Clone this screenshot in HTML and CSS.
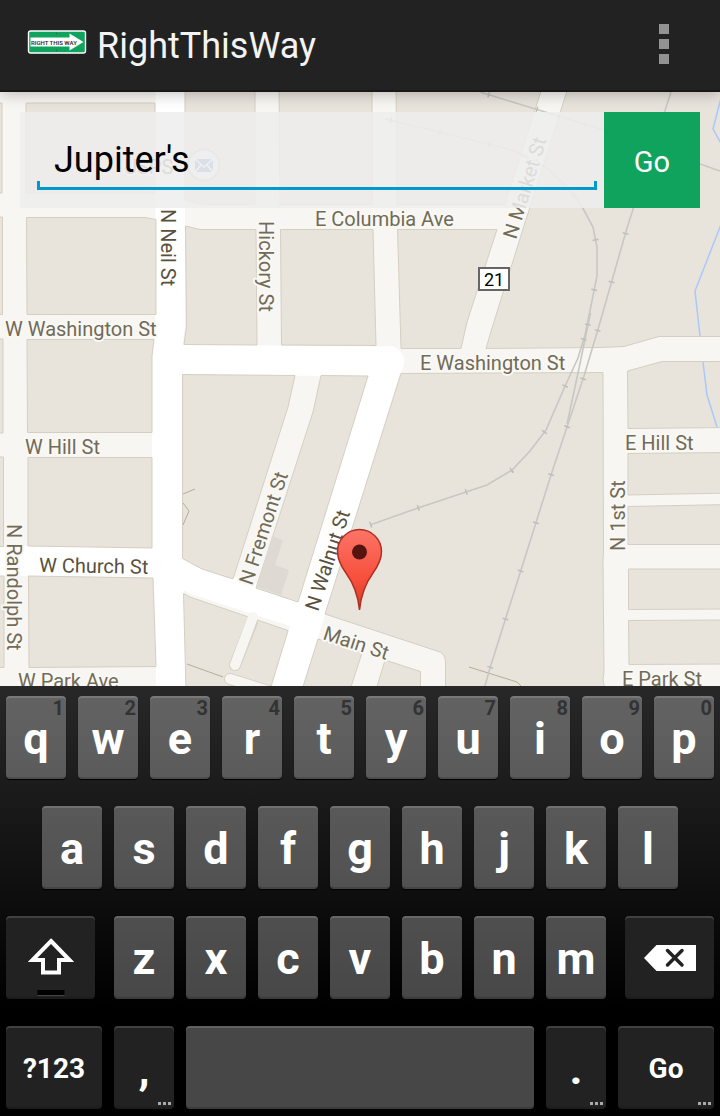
FILE: index.html
```html
<!DOCTYPE html>
<html lang="en">
<head>
<meta charset="utf-8">
<meta name="viewport" content="width=device-width, initial-scale=1">
<title>RightThisWay</title>
<link rel="stylesheet" href="styles.css">
</head>
<body>
<header class="bar">
  <svg class="logo" viewBox="0 0 60 24" aria-hidden="true">
    <rect x="1.500" y="1" width="57" height="22" rx="2" fill="#10a35e" stroke="#fff" stroke-width="1.4"/>
    <path d="M3.500 7.500H42.500V3.500L56.500 12L42.500 20.500V16.500H3.500Z" fill="#fff"/>
    <text x="4" y="14.500" class="logo-text">RIGHT THIS WAY</text>
    <circle cx="29.500" cy="3.500" r=".8" fill="#35604a"/>
    <circle cx="29.500" cy="20.500" r=".8" fill="#35604a"/>
  </svg>
  <h1 class="title">RightThisWay</h1>
  <button class="more" type="button" aria-label="More options"><span class="dot"></span><span class="dot"></span><span class="dot"></span></button>
</header>

<main class="stage">
  <svg class="map" viewBox="0 92 720 594" preserveAspectRatio="xMidYMin slice" role="img" aria-label="Street map">
    <defs>
      <linearGradient id="pin" x1="0" y1="0" x2="0" y2="1">
        <stop offset="0" stop-color="#fb7468"/><stop offset=".6" stop-color="#f8503d"/><stop offset="1" stop-color="#d93a26"/>
      </linearGradient>
    </defs>
    <rect x="0" y="92" width="720" height="594" fill="#f7f6f2"/>
    <g class="major">
      <path d="M155.500 80H185V326L182 350V558L184 594L186 690H156V667L153 578L152 548V355L155.500 335Z" fill="#fff" stroke="none"/>
      <path d="M169 359.500L388 361.500L286 690"/>
      <path d="M-5 561H28L152 563L172 564L196 580L308 616"/>
    </g>
    <g class="blocks">
      <path d="M-5 103H2V193H-5ZM-5 217H2.500V314.500H-5ZM-5 339H3V433H-5ZM-5 457H3.500V546.500H-5ZM-5 576H4V667.500H-5Z"/>
      <path d="M26 103H155V194L145 193H26Z"/>
      <path d="M26.500 217.500H145L156 219.500V314.500H27Z"/>
      <path d="M27 339.500H154L152 356V432.500H27.500Z"/>
      <path d="M28 457.500H152V548L28 546Z"/>
      <path d="M28.500 576L153 578L156 666.500L29 667.500Z"/>
      <path d="M185 80H255V204.500H205L185 200Z"/>
      <path d="M185.500 226L200 229.500H256L257 345L184 344.500L186.500 326Z"/>
      <path d="M279 80H372V204.500H280Z"/>
      <path d="M280.500 229.500H373L376 345.500L281.500 345Z"/>
      <path d="M396 80H544.500L505 204.500H397Z"/>
      <path d="M397.500 229.500H497L467 322L461 348.500H401Z"/>
      <path d="M570.500 80H730V336.500H659L624 346.500L600 347.500L486 348.500L492 328L523 229Z"/>
      <path d="M182.500 374.500L295 375.500L288 407L233 579L202 569L182.500 558.500Z"/>
      <path d="M321 375.500L368 376L298 602L256 588L313 412Z"/>
      <path d="M183.500 593.500L190 597L288 630.500L270 690H186Z"/>
      <path d="M401 373.500L603 372.500L603.500 553L603 561L604 672L603 680L605 690H445.500V662Q445.500 653 437 651L325 614Z"/>
      <path d="M318 639L362 653L350 690H302Z"/>
      <path d="M385 660L420.500 671.500V690H376Z"/>
      <path d="M627.500 371L662 361.500H730V427.500L628 428.500Z"/>
      <path d="M628 453.500L730 452.500V493L628 495Z"/>
      <path d="M628 506.500L730 504.500V544.500H628Z"/>
      <path d="M628.500 569H730V609L628.500 609.500Z"/>
      <path d="M628.500 620.500L730 620V664L629 664.500Z"/>
    </g>
    <path d="M272 536L283 540L275 565L289 570L281 595L257 587Z" fill="#dedad3"/>
    <path d="M388 346A15.500 15.500 0 0 1 404 362Q404 368 400 374L382 362Z" fill="#fff"/>
    <g fill="none" stroke-linecap="round">
      <path d="M252 622L235 665M230 679L285 696" stroke="#d8d2c5" stroke-width="12"/>
      <path d="M253 617L235 665M230 679L285 696" stroke="#f7f6f2" stroke-width="10"/>
    </g>
    <g fill="none" stroke="#b5ae95" stroke-width="1">
      <path d="M183 494L195 489M183 503L189 511L183 525M187 664L223 677M469 667L517 682L521 686"/>
    </g>
    <g class="water"><path d="M721 98L713 129L722 145M722 222L695 291L700 336M703 362L707 395L717 427"/></g>
    <g class="rail">
      <path d="M370 525L418 508L466 492L487 485L512 470L530 451L546 430L566 384L578 358L585 335L593 296L597 276V247L593 227L580 203L565 185L545 167L515 151L443 133L385 119"/>
      <path d="M488 94.500L537 109.500L604 130L720 171"/>
      <path d="M490 668L521 570L552 472L568 424L584 376L599 326L627 228L671 92"/>
      <path d="M480 92L488 94.500M485 686L490 668M590.500 313L588 325L578 373L567 424"/>
    </g>
    <g class="ties">
      <path d="M370 525L418 508L466 492L487 485L512 470L530 451L546 430L566 384L578 358L585 335L593 296L597 276V247L593 227L580 203L565 185L545 167L515 151L443 133L385 119"/>
      <path d="M488 94.500L537 109.500L604 130"/>
      <path d="M490 668L521 570L552 472L568 424L584 376L599 326L627 228"/>
      <path d="M588 324L578 373"/>
    </g>
    <g class="labels">
      <text x="124" y="174">USPS</text>
      <text x="315" y="226">E Columbia Ave</text>
      <text x="5" y="336">W Washington St</text>
      <text x="420" y="370">E Washington St</text>
      <text x="25" y="454">W Hill St</text>
      <text x="625" y="450">E Hill St</text>
      <text x="18" y="688">W Park Ave</text>
      <text x="622" y="686">E Park St</text>
      <text transform="translate(259 221) rotate(90)">Hickory St</text>
      <text transform="translate(7 524) rotate(90)">N Randolph St</text>
      <text transform="translate(625 551) rotate(-90)">N 1st St</text>
      <text transform="translate(516 240) rotate(-73)">N Market St</text>
      <text transform="translate(252 586) rotate(-72)">N Fremont St</text>
      <text transform="translate(322 639) rotate(18)">Main St</text>
      <g class="strong">
        <text transform="translate(161 209) rotate(90)">N Neil St</text>
        <text transform="translate(39 572) rotate(1)">W Church St</text>
        <text transform="translate(318 612) rotate(-72)">N Walnut St</text>
      </g>
    </g>
    <circle cx="204" cy="165" r="15.500" fill="#f8f8f8" stroke="#c8c4bc" stroke-width="2"/>
    <rect x="195" y="159" width="18" height="13" fill="#6488d0"/>
    <path d="M195 159L204 167L213 159M195 172L201 165M213 172L207 165" fill="none" stroke="#fff" stroke-width="1.500"/>
    <rect x="479" y="268" width="30" height="22" fill="#fff" stroke="#666" stroke-width="2"/>
    <text x="494" y="285.500" class="route">21</text>
    <path d="M359.500 610C358 594 354 584 346 573C341 566 337.500 560 337.500 551.500A22 22 0 0 1 381.500 551.500C381.500 560 378 566 373 573C365 584 361 594 359.500 610Z" fill="url(#pin)" stroke="#b02f23" stroke-width="1.500"/>
    <circle cx="359.500" cy="552" r="7.500" fill="#561410"/>
  </svg>
  <form class="search" onsubmit="return false">
    <div class="field"><input class="query" type="text" value="Jupiter's" aria-label="Destination"></div>
    <button class="go" type="submit">Go</button>
  </form>
</main>

<section class="keyboard" aria-label="Keyboard">
  <div class="row">
    <button class="key" type="button">q<span class="alt">1</span></button>
    <button class="key" type="button">w<span class="alt">2</span></button>
    <button class="key" type="button">e<span class="alt">3</span></button>
    <button class="key" type="button">r<span class="alt">4</span></button>
    <button class="key" type="button">t<span class="alt">5</span></button>
    <button class="key" type="button">y<span class="alt">6</span></button>
    <button class="key" type="button">u<span class="alt">7</span></button>
    <button class="key" type="button">i<span class="alt">8</span></button>
    <button class="key" type="button">o<span class="alt">9</span></button>
    <button class="key" type="button">p<span class="alt">0</span></button>
  </div>
  <div class="row inset">
    <button class="key" type="button">a</button>
    <button class="key" type="button">s</button>
    <button class="key" type="button">d</button>
    <button class="key" type="button">f</button>
    <button class="key" type="button">g</button>
    <button class="key" type="button">h</button>
    <button class="key" type="button">j</button>
    <button class="key" type="button">k</button>
    <button class="key" type="button">l</button>
  </div>
  <div class="row">
    <button class="key dark shift" type="button" aria-label="Shift">
      <svg class="shift-icon" viewBox="0 0 48 60" aria-hidden="true">
        <path d="M24 4L42.500 23H32V35.500H16V23H5.500Z" fill="none" stroke="#fff" stroke-width="4"/>
        <rect x="10.500" y="53" width="27" height="5" fill="#000"/><rect x="10.500" y="58" width="27" height="1" fill="#444"/>
      </svg>
    </button>
    <button class="key" type="button">z</button>
    <button class="key" type="button">x</button>
    <button class="key" type="button">c</button>
    <button class="key" type="button">v</button>
    <button class="key" type="button">b</button>
    <button class="key" type="button">n</button>
    <button class="key" type="button">m</button>
    <button class="key dark erase" type="button" aria-label="Backspace">
      <svg class="erase-icon" viewBox="0 0 52 26" aria-hidden="true">
        <path d="M0 13L12.500 0H52V26H12.500Z" fill="#fff"/><path d="M23.500 5.500L38 20M38 5.500L23.500 20" stroke="#222" stroke-width="3.500" stroke-linecap="round"/>
      </svg>
    </button>
  </div>
  <div class="row">
    <button class="key dark wide" type="button">?123</button>
    <button class="key dark" type="button">,<span class="hint"></span></button>
    <button class="key space" type="button" aria-label="Space"></button>
    <button class="key dark" type="button">.<span class="hint"></span></button>
    <button class="key dark wide" type="button">Go<span class="hint"></span></button>
  </div>
</section>
</body>
</html>
```
FILE: styles.css
```css
* { box-sizing: border-box; }

body {
  margin: 0;
  min-height: 100vh;
  display: flex;
  flex-direction: column;
  background: #000;
  font-family: Roboto, "Liberation Sans", sans-serif;
}

button {
  margin: 0;
  padding: 0;
  border: 0;
  font-family: inherit;
  cursor: pointer;
}

.bar {
  position: relative;
  z-index: 1;
  display: flex;
  align-items: center;
  height: 92px;
  padding: 0 36px 2px 27px;
  background: #222;
  border-bottom: 2px solid #181818;
  box-shadow: 0 2px 14px rgba(0, 0, 0, .25);
}

.logo { width: 60px; height: 24px; margin-bottom: 4px; }
.logo-text { font: 500 6px Roboto, "Liberation Sans", sans-serif; fill: #222; }

.title {
  flex: 1;
  margin: 4px 0 0 10px;
  font-size: 36px;
  line-height: 42px;
  font-weight: 400;
  color: #f3f3f3;
}

.more {
  display: flex;
  flex-direction: column;
  align-items: center;
  gap: 5px;
  width: 40px;
  background: none;
}
.dot { width: 10px; height: 10px; background: #929292; }

.stage {
  position: relative;
  flex: 1;
  min-height: 320px;
  overflow: hidden;
  background: #e8e4dc;
}

.map {
  position: absolute;
  inset: 0;
  width: 100%;
  height: 100%;
}

.major { fill: none; stroke: #fff; stroke-width: 30px; stroke-linejoin: round; }
.blocks { fill: #e8e4dc; stroke: #d5cfc1; stroke-width: 1px; }
.water { fill: none; stroke: #a9c8fb; stroke-width: 1.5px; }
.rail { fill: none; stroke: #c8c7c4; stroke-width: 1.6px; }
.ties { fill: none; stroke: #bfbebb; stroke-width: 6px; stroke-dasharray: 1.5 49; }

.labels {
  font-size: 20px;
  fill: #716b57;
  stroke: #f9f8f5;
  stroke-width: 4px;
  stroke-linejoin: round;
  paint-order: stroke;
}
.strong { fill: #58513e; stroke: #fff; }
.route { font-size: 18px; text-anchor: middle; fill: #000; }

.search {
  position: relative;
  display: flex;
  margin: 20px;
}

.field {
  flex: 1;
  height: 96px;
  padding: 14px 7px 18px 17px;
  background: rgba(238, 238, 238, .86);
}

.query {
  display: block;
  width: 100%;
  height: 64px;
  padding: 4px 17px 0;
  border: 0;
  outline: 0;
  font-family: inherit;
  font-size: 36px;
  color: #000;
  background:
    linear-gradient(#0099cc, #0099cc) left bottom / 3px 9px no-repeat,
    linear-gradient(#0099cc, #0099cc) right bottom / 3px 9px no-repeat,
    linear-gradient(#0099cc, #0099cc) left bottom / 100% 3px no-repeat;
}

.go {
  width: 96px;
  padding-top: 4px;
  font-size: 29px;
  color: #fff;
  background: #0fa35e;
}

.keyboard {
  display: flex;
  flex-direction: column;
  gap: 27px;
  padding: 10px 6px 7px;
  background: linear-gradient(#282828, #000 75%);
}

.row { display: flex; gap: 12px; }
.inset { padding: 0 36px; }

.key {
  position: relative;
  flex: 60 1 0;
  display: flex;
  align-items: center;
  justify-content: center;
  min-width: 0;
  height: 83px;
  padding-top: 2px;
  border-radius: 4px;
  background: rgba(255, 255, 255, .28);
  box-shadow: inset 0 2px 0 rgba(255, 255, 255, .14), inset 0 -2px 0 rgba(0, 0, 0, .15), 0 1px 1px #000;
  font-size: 45px;
  font-weight: 700;
  color: #fff;
}
.dark { background: #222; }
.wide { flex-grow: 96; font-size: 28px; }
.space { flex-grow: 348; }
.shift { flex-grow: 89; margin-right: 7px; }
.erase { flex-grow: 89; margin-left: 7px; padding: 0; }
.shift-icon { width: 48px; height: 60px; margin-top: 16px; }
.erase-icon { width: 52px; height: 26px; }

.alt {
  position: absolute;
  top: 1px;
  right: 2px;
  font-size: 20px;
  line-height: 23px;
  color: #333;
}

.hint {
  position: absolute;
  right: 3px;
  bottom: 4px;
  width: 13px;
  height: 3px;
  background: repeating-linear-gradient(90deg, #aaa 0 3px, transparent 3px 5px);
}
```
